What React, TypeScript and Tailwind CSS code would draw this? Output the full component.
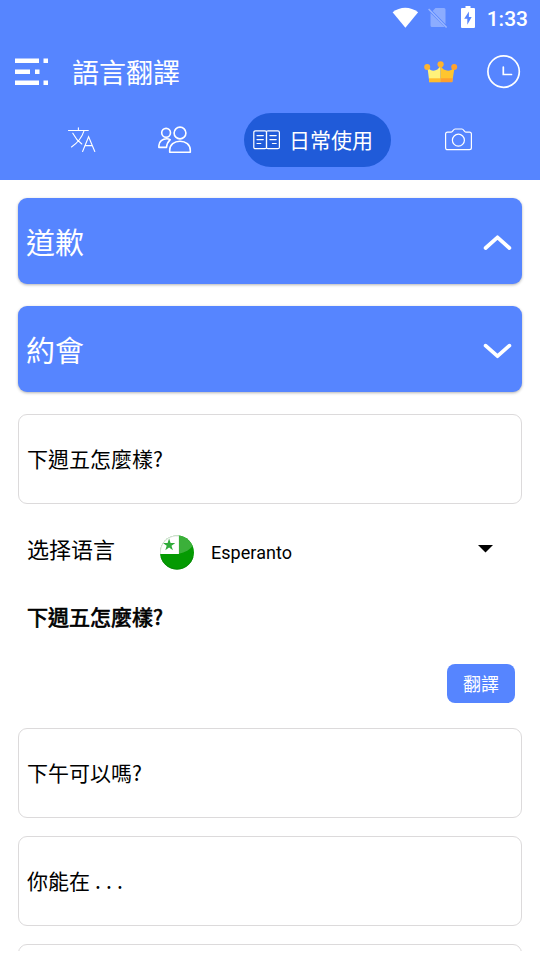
import type { ReactNode } from "react";

function StatusBar() {
  return (
    <div className="flex h-9 items-center justify-end pr-[12px]">
      <svg width="27" height="22" viewBox="0 0 27 22" className="mr-[9px]">
        <path d="M0.6 5.3C8 -0.9 18.5 -0.9 26.1 5.3L13.4 20.8Z" fill="#fff" />
      </svg>
      <svg width="20" height="22" viewBox="0 0 20 22" className="mr-[13px]">
        <path
          d="M7.5 1H16Q17.5 1 17.5 2.5V17.2L4.6 3.9ZM2.5 5.9L16.7 20H4Q2.5 20 2.5 18.5Z"
          fill="#fff"
          opacity="0.32"
        />
        <path d="M0.6 2L18.6 20.6" stroke="#fff" strokeWidth="1.5" opacity="0.4" />
      </svg>
      <svg width="14" height="22" viewBox="0 0 14 22" className="mr-[12px] -mt-[2px]">
        <path
          d="M4.5 0H9.5V2H13Q14 2 14 3V21Q14 22 13 22H1Q0 22 0 21V3Q0 2 1 2H4.5Z"
          fill="#fff"
        />
        <path d="M7.9 5.4L3.2 12.8H6.3V18.7L10.7 10.9H7.9Z" fill="#5685ff" />
      </svg>
      <span className="pt-[2px] text-[21px] font-medium leading-none">1:33</span>
    </div>
  );
}

function MenuIcon() {
  return (
    <svg width="33" height="28" viewBox="0 0 33 28" fill="#fff" className="-mt-[1px]">
      <path d="M0 0.5H24V5H0ZM28.5 0.5H33V5H28.5ZM0 11.5H15V16H0ZM20 11.5H24.5V16H20ZM0 22.5H24V27H0ZM28.5 22.5H33V27H28.5Z" />
    </svg>
  );
}

function CrownIcon() {
  return (
    <svg width="34" height="22" viewBox="0 0 34 22">
      <path d="M3.5 6.5C7 11 13.5 11 16.5 4.5V21H5.3Z" fill="#fff27a" />
      <path d="M16.5 4.5C19.5 11 27 11 30.5 6.5L28.3 21H16.5Z" fill="#ffc52e" />
      <path d="M5 17.3H16.7V21.3H5Z" fill="#ffbd2e" />
      <path d="M16.7 17.3H28.7L28.2 21.3H16.7Z" fill="#ff9f2e" />
      <circle cx="3.2" cy="5.9" r="3" fill="#ffb32d" />
      <circle cx="16.6" cy="3.3" r="3.1" fill="#ffb32d" />
      <circle cx="30.2" cy="5.9" r="3" fill="#ffa22e" />
    </svg>
  );
}

function ClockIcon() {
  return (
    <svg width="34" height="34" viewBox="0 0 34 34" fill="none" stroke="#fff">
      <circle cx="16.6" cy="16.6" r="15.7" strokeWidth="1.7" />
      <path d="M16.3 12V19.5H24.5" strokeWidth="1.7" strokeLinecap="round" />
    </svg>
  );
}

function TranslateIcon() {
  return (
    <svg
      width="28"
      height="26"
      viewBox="0 0 28 26"
      fill="none"
      stroke="#fff"
      strokeWidth="1.1"
      strokeLinecap="round"
    >
      <path d="M0.5 3.5H20.3M10.4 0.7V3.5M4.8 6.2C7.2 11 10.5 14.5 13.8 17M15.9 4.2C13.8 10.8 9.5 16 3.5 20" />
      <path d="M14.6 24.5L20.6 9.7L26.8 24.5M16.8 18.6H24.3" />
    </svg>
  );
}

function PeopleIcon() {
  return (
    <svg
      width="34"
      height="28"
      viewBox="0 0 34 28"
      fill="none"
      stroke="#fff"
      strokeWidth="1.6"
      strokeLinejoin="round"
    >
      <circle cx="8.1" cy="6.8" r="4.4" />
      <circle cx="22" cy="7" r="5.9" />
      <path d="M11.7 26.3V24.3C11.7 18.8 16.2 15.2 22 15.2S32.3 18.8 32.3 24.3V26.3Z" />
      <path d="M0.9 21.4V19.5C0.9 15.3 4.6 12.8 8.8 12.8C10.1 12.8 11.2 13.1 12.2 13.6C10.2 15.5 8.8 18 8.5 21.4Z" />
    </svg>
  );
}

function BookIcon() {
  return (
    <svg
      width="28"
      height="20"
      viewBox="0 0 28 20"
      fill="none"
      stroke="#fff"
      strokeWidth="1.2"
      strokeLinecap="round"
    >
      <path d="M2.5 0.8H12Q13.5 0.8 13.5 2.3V17.2Q13.5 18.7 12 18.7H2.5Q0.8 18.7 0.8 17.2V2.5Q0.8 0.8 2.5 0.8Z" />
      <path d="M15 0.8H24.7Q26.4 0.8 26.4 2.5V17.2Q26.4 18.7 24.7 18.7H15Q13.5 18.7 13.5 17.2V2.3Q13.5 0.8 15 0.8Z" />
      <path d="M4 5.6H10.3M4 9.6H10.3M4 13.5H7.8M16.9 5.6H23.2M16.9 9.6H23.2M19.4 13.5H23.2" />
    </svg>
  );
}

function CameraIcon() {
  return (
    <svg
      width="28"
      height="23"
      viewBox="0 0 28 23"
      fill="none"
      stroke="#fff"
      strokeWidth="1.2"
      strokeLinejoin="round"
      className="-mt-[2px]"
    >
      <path d="M2.6 4.1H6.2C7.8 4.1 8.3 1 10.1 1H16.9C18.7 1 19.2 4.1 20.8 4.1H24.4Q26.4 4.1 26.4 6V19.8Q26.4 21.7 24.4 21.7H2.6Q0.6 21.7 0.6 19.8V6Q0.6 4.1 2.6 4.1Z" />
      <circle cx="13.4" cy="12.2" r="6" />
    </svg>
  );
}

function EsperantoFlag() {
  return (
    <svg width="34" height="35" viewBox="0 0 34 35">
      <defs>
        <clipPath id="flag">
          <circle cx="17" cy="17.5" r="17" />
        </clipPath>
      </defs>
      <g clipPath="url(#flag)">
        <path d="M0 0H34V35H0Z" fill="#049a02" />
        <path d="M18 0H34V9C31 14 25.5 17.8 18 18.9Z" fill="#3bb03a" />
        <path d="M0 0H18.9V18.9H0Z" fill="#fff" />
        <path
          d="M9.1 3.5L10.6 8H15.3L11.5 10.8L12.9 15.3L9.1 12.5L5.3 15.3L6.7 10.8L2.9 8H7.6Z"
          fill="#30ab3a"
        />
      </g>
      <path d="M0.4 19A16.6 16.6 0 0 1 19 1" fill="none" stroke="#d4d9d4" strokeWidth="0.8" />
      <path d="M1 22A16.6 16.6 0 0 0 33 22" fill="none" stroke="#078406" strokeWidth="0.8" />
    </svg>
  );
}

function Category({ title, open }: { title: string; open?: boolean }) {
  return (
    <button
      className="flex h-[86px] shrink-0 items-center justify-between rounded-[9px] bg-[#5685ff] pl-[8px] pr-[10px] text-[29px] text-white shadow-[0_1px_3px_rgba(0,0,0,0.3)]"
      type="button"
    >
      <span className="pt-[7px] leading-none">{title}</span>
      <svg
        width="29"
        height="16"
        viewBox="0 0 29 16"
        fill="none"
        stroke="#fff"
        strokeWidth="3.7"
        strokeLinecap="round"
        strokeLinejoin="round"
        className="mt-[3px]"
      >
        <path d={open ? "M2.6 13L14.5 2.3L26.4 13" : "M2.6 2.6L14.5 13.2L26.4 2.6"} />
      </svg>
    </button>
  );
}

function Phrase({ children }: { children?: ReactNode }) {
  return (
    <div className="flex h-[90px] shrink-0 items-center rounded-[9px] border border-[#dcdadb] bg-white pb-[2px] pl-[8px] font-['Noto_Sans_CJK_TC',sans-serif] text-[21px] leading-none [word-spacing:0.4px]">
      {children}
    </div>
  );
}

export default function App() {
  return (
    <div
      className="flex h-[960px] w-[540px] flex-col overflow-hidden bg-white font-[Roboto,'Noto_Sans_CJK_TC',sans-serif] text-black"
      lang="zh-Hant"
    >
      <header className="h-[180px] shrink-0 bg-[#5685ff] text-white">
        <StatusBar />
        <div className="flex h-[72px] items-center pl-[15px] pr-[19px]">
          <MenuIcon />
          <h1 className="ml-[24px] flex-1 pt-[5px] text-[27px] leading-none">語言翻譯</h1>
          <CrownIcon />
          <div className="ml-[29px]">
            <ClockIcon />
          </div>
        </div>
        <nav className="mt-[5px] flex h-[54px] items-center pl-[68px]">
          <TranslateIcon />
          <div className="ml-[62px]">
            <PeopleIcon />
          </div>
          <div className="ml-[52px] flex h-[54px] w-[147px] items-center rounded-full bg-[#205bd9] pl-[9px]">
            <BookIcon />
            <span className="ml-[8px] pt-[2px] text-[21px] leading-none">日常使用</span>
          </div>
          <div className="ml-[54px]">
            <CameraIcon />
          </div>
        </nav>
      </header>

      <main className="flex h-[771px] shrink-0 flex-col overflow-hidden px-[18px] pt-[18px]">
        <Category title="道歉" open />
        <div className="mt-[22px] flex flex-col">
          <Category title="約會" />
        </div>
        <div className="mt-[22px] flex flex-col">
          <Phrase>下週五怎麼樣?</Phrase>
        </div>

        <section className="h-[224px] shrink-0 pt-[30px]">
          <div className="flex h-[36px] items-center pl-[9px]">
            <span
              className="w-[133px] pb-[2px] font-[Roboto,'Noto_Sans_CJK_SC',sans-serif] text-[22px] leading-none"
              lang="zh-Hans"
            >
              选择语言
            </span>
            <EsperantoFlag />
            <span className="ml-[17px] flex-1 pt-[2px] text-[18px] leading-none tracking-[0.05px]">
              Esperanto
            </span>
            <svg width="15" height="8" viewBox="0 0 15 8" className="mr-[29px] mb-[7px]">
              <path d="M0 0H15L7.5 7.5Z" fill="#000" />
            </svg>
          </div>
          <p className="mt-[36px] pl-[9px] font-['Noto_Sans_CJK_TC',sans-serif] text-[21px] leading-none [-webkit-text-stroke:0.7px_#000]">
            下週五怎麼樣?
          </p>
          <button
            className="mt-[37px] mr-[7px] ml-auto flex h-[39px] w-[68px] items-center justify-center rounded-[8px] bg-[#5685ff] pt-[2px] text-[18px] leading-none text-white"
            type="button"
          >
            翻譯
          </button>
        </section>

        <div className="flex flex-col gap-[18px]">
          <Phrase>下午可以嗎?</Phrase>
          <Phrase>你能在 . . .</Phrase>
          <Phrase />
        </div>
      </main>
    </div>
  );
}
